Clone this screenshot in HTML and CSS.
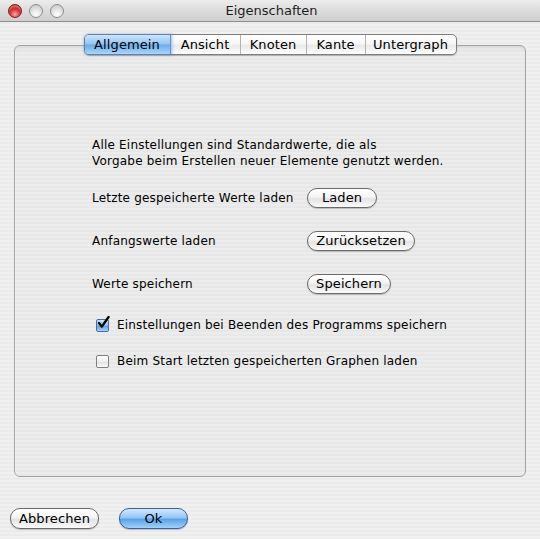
FILE: index.html
```html
<!DOCTYPE html>
<html lang="de">
<head>
<meta charset="utf-8">
<title>Eigenschaften</title>
<link rel="stylesheet" href="styles.css">
</head>
<body>
<div class="window">
  <div class="titlebar">
    <div class="lights">
      <span class="light red"></span>
      <span class="light gray"></span>
      <span class="light gray"></span>
    </div>
    <div class="title">Eigenschaften</div>
  </div>
  <div class="content">
    <div class="panel">
      <div class="tabs">
        <div class="tab active t1">Allgemein</div>
        <div class="tab t2">Ansicht</div>
        <div class="tab t3">Knoten</div>
        <div class="tab t4">Kante</div>
        <div class="tab last t5">Untergraph</div>
      </div>
      <div class="body">
        <p class="intro">Alle Einstellungen sind Standardwerte, die als<br>Vorgabe beim Erstellen neuer Elemente genutzt werden.</p>
        <div class="row first">
          <span class="label">Letzte gespeicherte Werte laden</span>
          <span class="btn b-laden">Laden</span>
        </div>
        <div class="row">
          <span class="label">Anfangswerte laden</span>
          <span class="btn b-reset">Zurücksetzen</span>
        </div>
        <div class="row">
          <span class="label">Werte speichern</span>
          <span class="btn b-save">Speichern</span>
        </div>
        <div class="check first-check">
          <span class="box checked">
            <svg width="14" height="14" viewBox="0 0 14 14"><path d="M3 7 L5.8 10.6 L12.6 1" fill="none" stroke="#000" stroke-width="2.3" stroke-linecap="round" stroke-linejoin="round"/></svg>
          </span>
          <span>Einstellungen bei Beenden des Programms speichern</span>
        </div>
        <div class="check">
          <span class="box"></span>
          <span>Beim Start letzten gespeicherten Graphen laden</span>
        </div>
      </div>
    </div>
    <div class="footer">
      <span class="btn cancel">Abbrechen</span>
      <span class="btn ok">Ok</span>
    </div>
  </div>
</div>
</body>
</html>
```
FILE: styles.css
```css
html, body {
  margin: 0;
  padding: 0;
}
body {
  font-family: "DejaVu Sans", "Liberation Sans", sans-serif;
  font-size: 12px;
  letter-spacing: 0.2px;
  color: #000;
}
.window {
  width: 540px;
  height: 539px;
  overflow: hidden;
  background: repeating-linear-gradient(to bottom, #f0f0f0 0, #f0f0f0 2px, #ebebeb 2px, #ebebeb 4px);
  display: flex;
  flex-direction: column;
}
.titlebar {
  height: 21px;
  border-bottom: 1px solid #8e8e8e;
  background: linear-gradient(to bottom, #ececec 0%, #dcdcdc 50%, #cfcfcf 100%);
  display: flex;
  align-items: center;
}
.lights {
  display: flex;
  gap: 7px;
  padding-left: 8px;
}
.light {
  width: 14px;
  height: 14px;
  border-radius: 50%;
  box-sizing: border-box;
}
.light.red {
  background: radial-gradient(circle at 50% 78%, #f6a8a8 0%, #dc3434 45%, #a01212 100%);
  border: 1px solid #7a1d1d;
  box-shadow: inset 0 2px 1px rgba(255,255,255,0.35);
}
.light.gray {
  background: radial-gradient(circle at 50% 78%, #ffffff 0%, #e4e4e4 45%, #c0c0c0 100%);
  border: 1px solid #8d8d8d;
}
.title {
  flex: 1;
  text-align: center;
  font-size: 13px;
  letter-spacing: 0;
  color: #1e1e1e;
  margin-right: 61px;
}
.content {
  flex: 1;
  padding: 0 14px;
  display: flex;
  flex-direction: column;
}
.panel {
  margin-top: 23px;
  height: 430px;
  border: 1px solid #a3a3a3;
  border-radius: 6px;
  background: rgba(0,0,0,0.015);
  box-shadow: inset 0 4px 4px -2px rgba(0,0,0,0.06), inset 1px 0 0 rgba(255,255,255,0.4);
  display: flex;
  flex-direction: column;
}
.tabs {
  margin: -12px auto 0;
  display: flex;
  height: 21px;
  box-sizing: border-box;
  border: 1px solid #7d7d7d;
  border-radius: 5px;
  background: linear-gradient(to bottom, #ffffff 0%, #f7f7f7 45%, #eaeaea 55%, #fdfdfd 100%);
  box-shadow: 0 1px 1px rgba(0,0,0,0.25);
  font-size: 13px;
  letter-spacing: 0.1px;
}
.tab {
  height: 19px;
  line-height: 19px;
  text-align: center;
  border-right: 1px solid #b3b3b3;
  box-sizing: border-box;
}
.t1 { width: 86px; }
.t2 { width: 70px; }
.t3 { width: 66px; }
.t4 { width: 59px; }
.t5 { width: 90px; }
.tab.last {
  border-right: none;
}
.tab.active {
  border-radius: 4px 0 0 4px;
  background: linear-gradient(to bottom, #cde5fb 0%, #93c5f3 48%, #6aabea 52%, #a9d6fb 100%);
  box-shadow: 0 0 3px 1px rgba(70,130,210,0.55);
  border-right: 1px solid #6e94c0;
}
.body {
  padding-left: 77px;
}
.intro {
  margin: 82px 0 0;
  line-height: 16px;
}
.row {
  display: flex;
  align-items: center;
  height: 20px;
  margin-top: 23px;
}
.row.first {
  margin-top: 19px;
}
.label {
  width: 215px;
  flex-shrink: 0;
  white-space: nowrap;
}
.btn {
  display: inline-block;
  box-sizing: border-box;
  height: 20px;
  line-height: 18px;
  padding: 0;
  border: 1px solid #6a6a6a;
  border-radius: 10px;
  background: linear-gradient(to bottom, #ffffff 0%, #f4f4f4 45%, #e3e3e3 55%, #fbfbfb 100%);
  box-shadow: 0 1px 1px rgba(0,0,0,0.2);
  text-align: center;
  font-size: 13px;
  letter-spacing: 0.1px;
}
.b-laden { width: 70px; }
.b-reset { width: 108px; }
.b-save { width: 84px; }
.check {
  display: flex;
  align-items: center;
  gap: 8px;
  padding-left: 4px;
  height: 16px;
  margin-top: 23px;
}
.check + .check {
  margin-top: 20px;
}
.box {
  width: 13px;
  height: 13px;
  box-sizing: border-box;
  border: 1px solid #808080;
  border-radius: 2px;
  background: linear-gradient(to bottom, #ffffff 0%, #f0f0f0 50%, #e2e2e2 55%, #fafafa 100%);
  position: relative;
}
.box.checked {
  border-color: #4a6f9d;
  background: linear-gradient(to bottom, #cfe6fb 0%, #8fc2f2 48%, #5aa2e6 55%, #a5d2fa 100%);
}
.box svg {
  position: absolute;
  left: -1px;
  top: -4px;
}
.footer {
  display: flex;
  gap: 20px;
  margin-top: 31px;
  margin-left: -4px;
}
.footer .btn {
  height: 21px;
  line-height: 19px;
}
.btn.cancel {
  width: 89px;
}
.btn.ok {
  width: 69px;
  border-color: #3e5f93;
  background: linear-gradient(to bottom, #d2e8fc 0%, #95c7f4 45%, #5aa3e8 55%, #9fd3fb 100%);
}
```
